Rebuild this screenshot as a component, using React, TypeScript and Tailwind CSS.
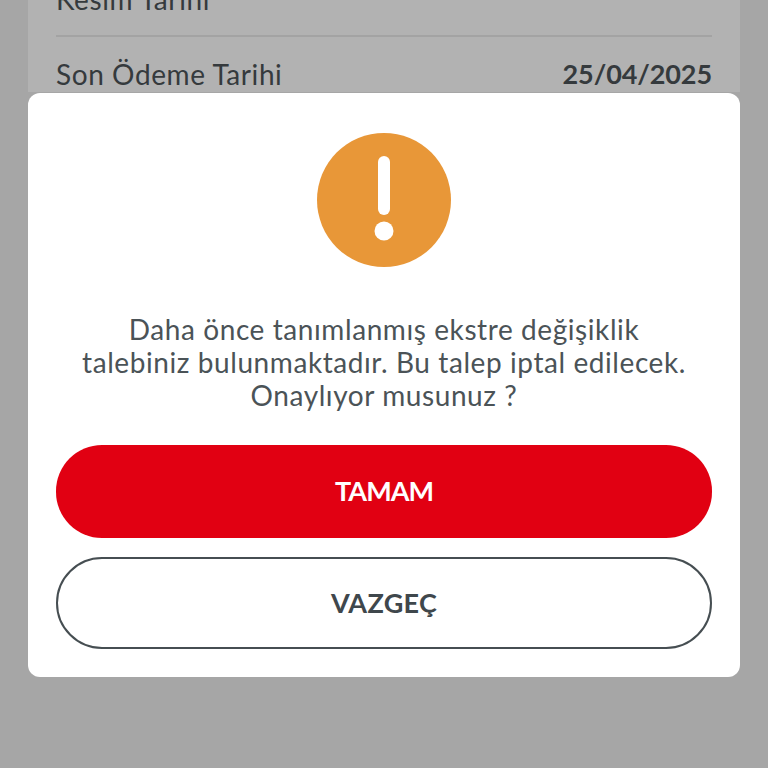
export default function App() {
  return (
    <div className="relative h-[768px] w-[768px] overflow-hidden bg-[#a6a6a6] font-['Lato',sans-serif]">
      {/* page behind the dimmed overlay */}
      <div className="mx-[28px] h-[110px] bg-[#b2b2b2] px-[28px] text-[#353a3d]">
        <div className="-mt-[18px] text-[28px] leading-[34px] tracking-[0.58px]">Kesim Tarihi</div>
        <div className="mt-[19px] h-[2px] bg-[#a3a3a3]" />
        <div className="mt-[20px] flex items-center justify-between text-[28px] leading-[34px] tracking-[0.58px]">
          <span>Son Ödeme Tarihi</span>
          <span className="text-[27px] font-bold tracking-[-0.1px]">25/04/2025</span>
        </div>
      </div>

      {/* dialog */}
      <div className="absolute left-[28px] top-[93px] flex h-[584px] w-[712px] flex-col items-center rounded-[12px] bg-white px-[28px] pt-[40px]">
        <svg width="134" height="134" viewBox="0 0 134 134">
          <circle cx="67" cy="67" r="67" fill="#e89738" />
          <rect x="61" y="23" width="12" height="59" rx="6" fill="#fff" />
          <circle cx="67" cy="98" r="9.5" fill="#fff" />
        </svg>
        <p className="mt-[46px] text-center text-[28px] leading-[33px] tracking-[0.58px] text-[#4b5357]">
          Daha önce tanımlanmış ekstre değişiklik
          <br />
          talebiniz bulunmaktadır. Bu talep iptal edilecek.
          <br />
          Onaylıyor musunuz ?
        </p>
        <button className="mt-[33px] flex h-[93px] w-full items-center justify-center rounded-[46px] bg-[#e10012] text-[27px] font-bold tracking-[-1px] text-white">
          TAMAM
        </button>
        <button className="mt-[19px] flex h-[92px] w-full items-center justify-center rounded-[46px] border-2 border-[#464e52] bg-white text-[27px] font-bold tracking-[0.3px] text-[#3f474c]">
          VAZGEÇ
        </button>
      </div>
    </div>
  );
}
